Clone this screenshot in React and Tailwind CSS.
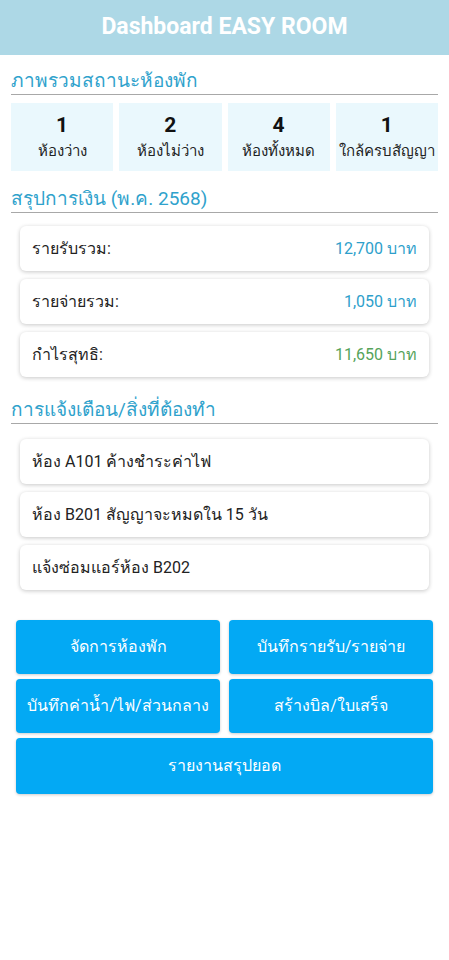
import React from 'react'

const stats = [
  { value: 1, label: 'ห้องว่าง' },
  { value: 2, label: 'ห้องไม่ว่าง' },
  { value: 4, label: 'ห้องทั้งหมด' },
  { value: 1, label: 'ใกล้ครบสัญญา' },
]

const finance = [
  { label: 'รายรับรวม:', value: '12,700 บาท', color: 'text-[#2e9fcb]' },
  { label: 'รายจ่ายรวม:', value: '1,050 บาท', color: 'text-[#2e9fcb]' },
  { label: 'กำไรสุทธิ:', value: '11,650 บาท', color: 'text-[#55a35a]' },
]

const alerts = ['ห้อง A101 ค้างชำระค่าไฟ', 'ห้อง B201 สัญญาจะหมดใน 15 วัน', 'แจ้งซ่อมแอร์ห้อง B202']

const SectionTitle = ({ children }) => (
  <div className="border-b-[1.5px] border-[#a8a8a8] text-[19px] leading-[26px] text-[#2fa2cc]">
    {children}
  </div>
)

const Card = ({ children }) => (
  <div className="flex h-[45px] items-center justify-between rounded-[6px] bg-white px-[12px] text-[16px] text-[#222] shadow-[0_1px_4px_rgba(0,0,0,0.22)]">
    {children}
  </div>
)

export default function App() {
  return (
    <div className="min-h-[960px] bg-white" style={{ fontFamily: 'Roboto, "Noto Sans", "DejaVu Sans", sans-serif' }}>
      <div className="flex h-[55px] items-center justify-center bg-[#add8e6]">
        <h1 className="text-[23px] font-bold text-white">Dashboard EASY ROOM</h1>
      </div>

      <div className="px-[11px] pt-[13px]">
        <SectionTitle>ภาพรวมสถานะห้องพัก</SectionTitle>

        <div className="mt-[8px] grid grid-cols-4 gap-[6px]">
          {stats.map((s, i) => (
            <div key={i} className="flex h-[68px] flex-col items-center justify-center bg-[#eaf8fd] pt-[2px]">
              <div className="text-[21px] font-bold leading-[26px] text-[#111]">{s.value}</div>
              <div className="whitespace-nowrap text-[15px] leading-[26px] text-[#222]">{s.label}</div>
            </div>
          ))}
        </div>

        <div className="mt-[15px]">
          <SectionTitle>สรุปการเงิน (พ.ค. 2568)</SectionTitle>
        </div>

        <div className="mx-[9px] mt-[13px] flex flex-col gap-[8px]">
          {finance.map((f, i) => (
            <Card key={i}>
              <span>{f.label}</span>
              <span className={f.color}>{f.value}</span>
            </Card>
          ))}
        </div>

        <div className="mt-[20px]">
          <SectionTitle>การแจ้งเตือน/สิ่งที่ต้องทำ</SectionTitle>
        </div>

        <div className="mx-[9px] mt-[15px] flex flex-col gap-[8px]">
          {alerts.map((a, i) => (
            <Card key={i}>
              <span>{a}</span>
            </Card>
          ))}
        </div>

        <div className="mx-[5px] mt-[30px] grid grid-cols-2 gap-[5px] gap-x-[9px]">
          <button className="h-[54px] rounded-[4px] bg-[#03a9f4] text-[16px] text-white shadow-[0_1px_3px_rgba(0,0,0,0.2)]">จัดการห้องพัก</button>
          <button className="h-[54px] rounded-[4px] bg-[#03a9f4] text-[16px] text-white shadow-[0_1px_3px_rgba(0,0,0,0.2)]">บันทึกรายรับ/รายจ่าย</button>
          <button className="h-[54px] rounded-[4px] bg-[#03a9f4] text-[16px] text-white shadow-[0_1px_3px_rgba(0,0,0,0.2)]">บันทึกค่าน้ำ/ไฟ/ส่วนกลาง</button>
          <button className="h-[54px] rounded-[4px] bg-[#03a9f4] text-[16px] text-white shadow-[0_1px_3px_rgba(0,0,0,0.2)]">สร้างบิล/ใบเสร็จ</button>
          <button className="col-span-2 h-[56px] rounded-[4px] bg-[#03a9f4] text-[16px] text-white shadow-[0_1px_3px_rgba(0,0,0,0.2)]">รายงานสรุปยอด</button>
        </div>
      </div>
    </div>
  )
}
